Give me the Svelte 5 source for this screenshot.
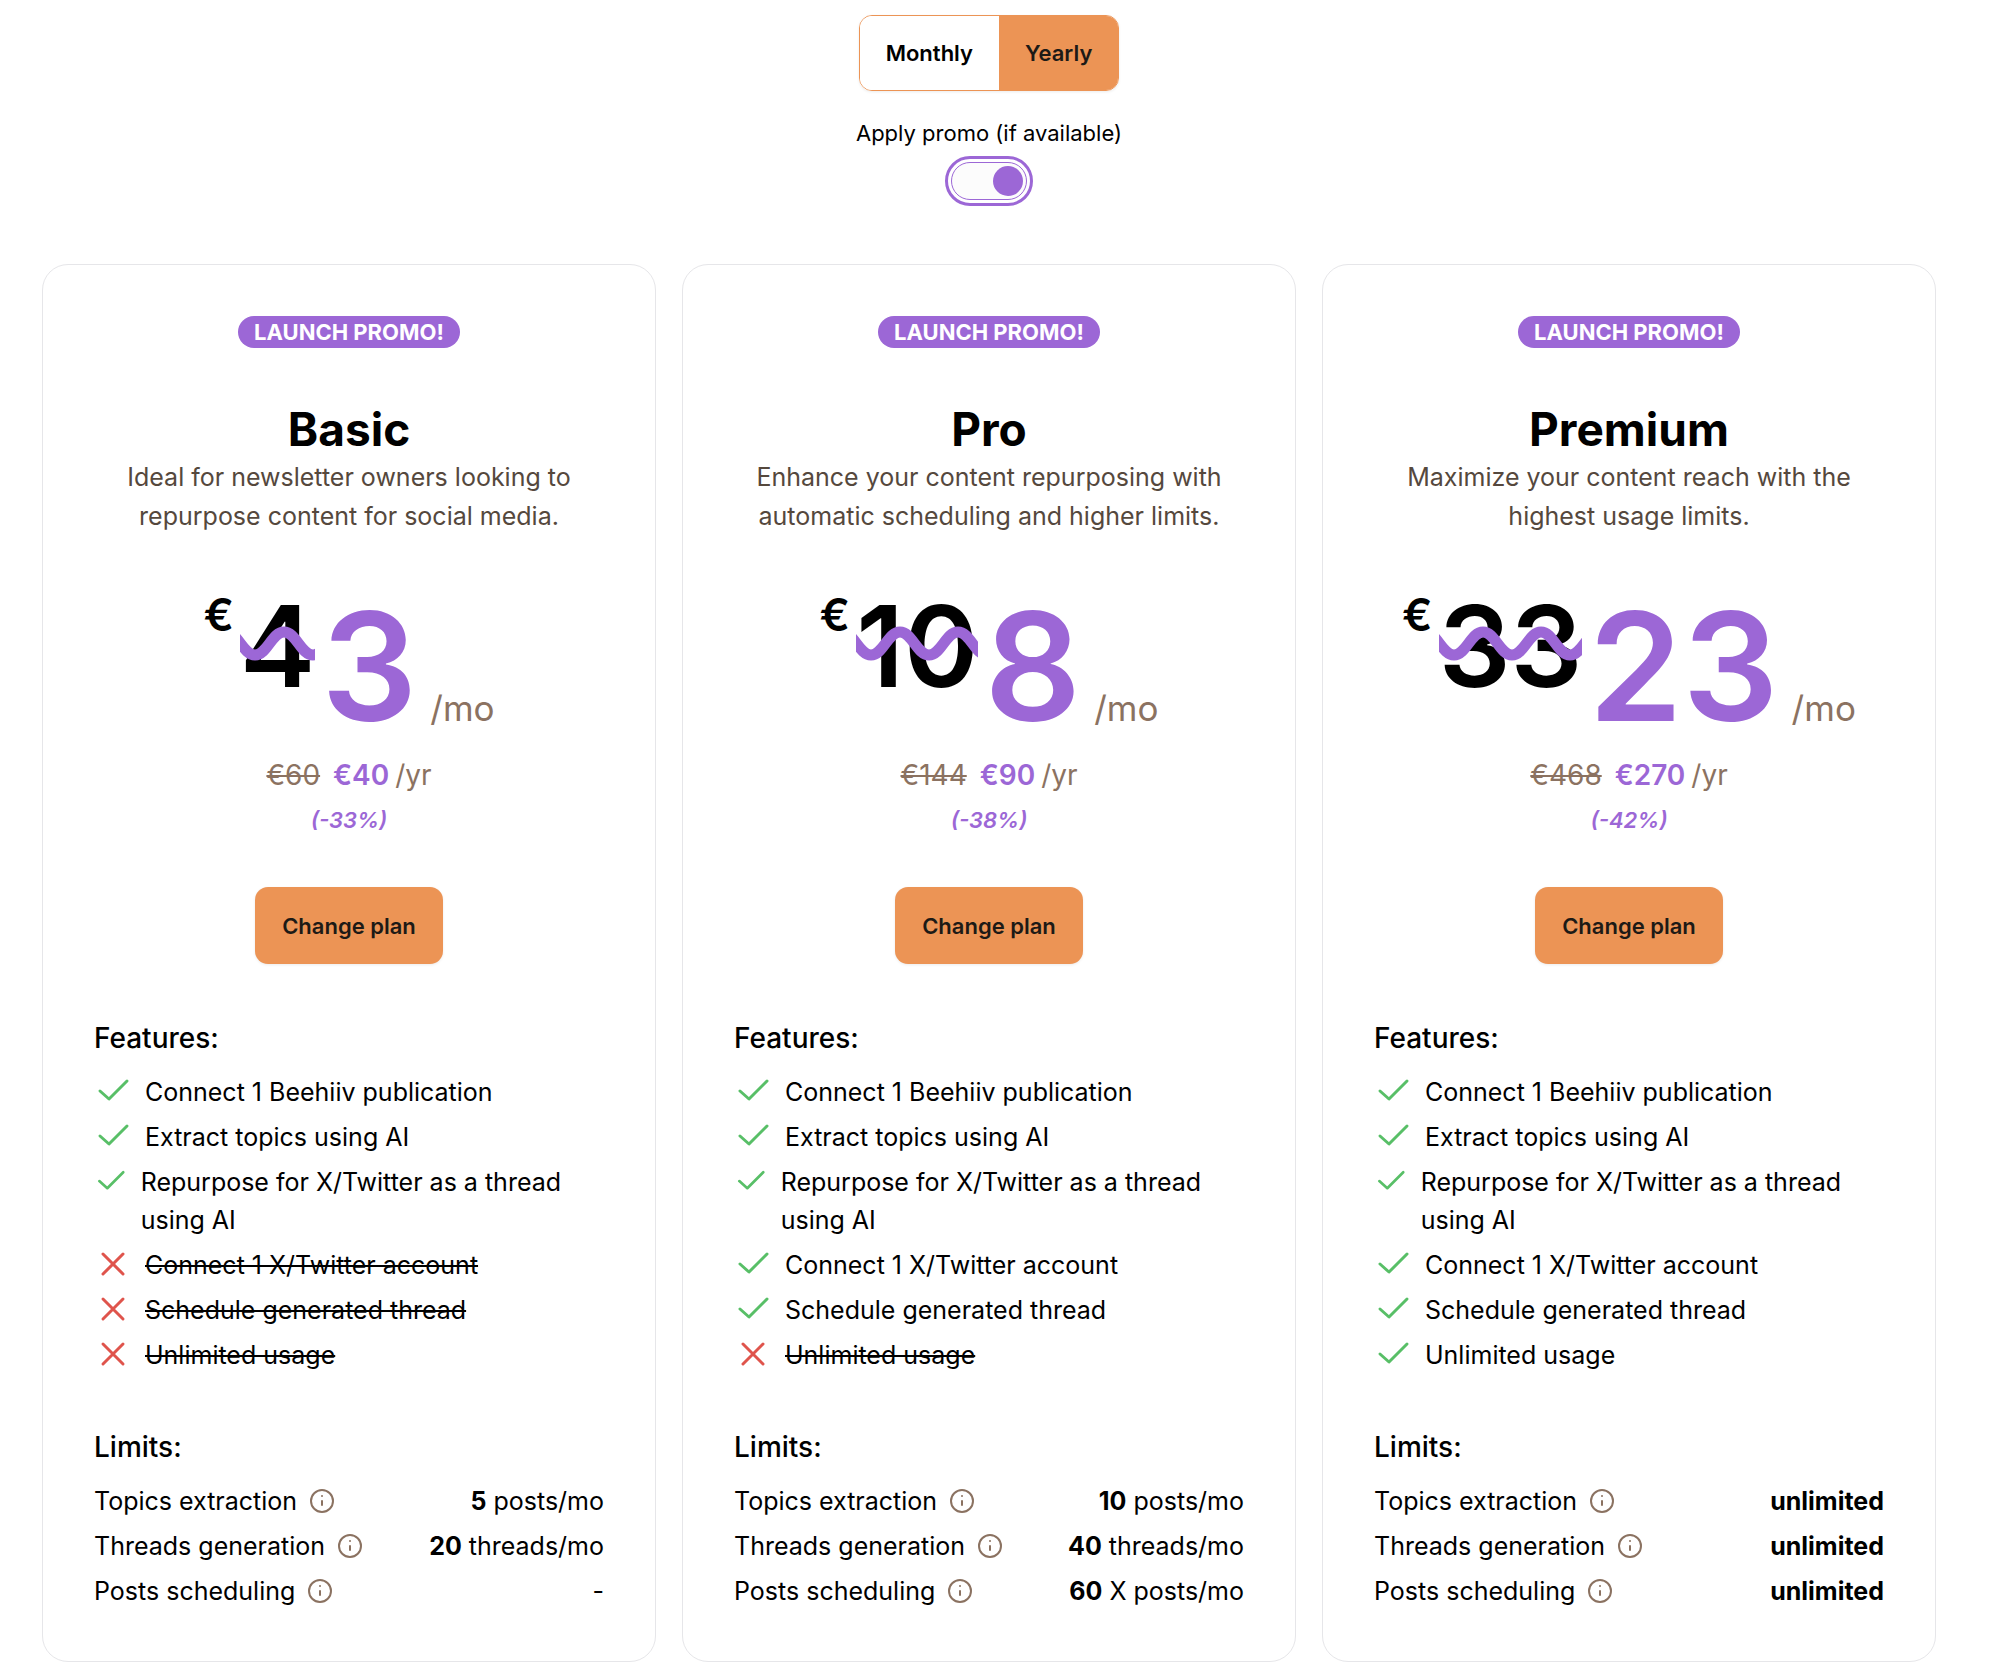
<script>
  let billing = $state('yearly');
  let promo = $state(true);

  const names = [
    'Connect 1 Beehiiv publication',
    'Extract topics using AI',
    'Repurpose for X/Twitter as a thread using AI',
    'Connect 1 X/Twitter account',
    'Schedule generated thread',
    'Unlimited usage'
  ];

  const plans = [
    {
      name: 'Basic',
      about: 'Ideal for newsletter owners looking to repurpose content for social media.',
      oldMonth: '4', month: '3', oldYear: '€60', year: '€40', off: '(-33%)',
      included: 3,
      limits: [['5', ' posts/mo'], ['20', ' threads/mo'], ['', '-']]
    },
    {
      name: 'Pro',
      about: 'Enhance your content repurposing with automatic scheduling and higher limits.',
      oldMonth: '10', month: '8', oldYear: '€144', year: '€90', off: '(-38%)',
      included: 5,
      limits: [['10', ' posts/mo'], ['40', ' threads/mo'], ['60', ' X posts/mo']]
    },
    {
      name: 'Premium',
      about: 'Maximize your content reach with the highest usage limits.',
      oldMonth: '33', month: '23', oldYear: '€468', year: '€270', off: '(-42%)',
      included: 6,
      limits: [['unlimited', ''], ['unlimited', ''], ['unlimited', '']]
    }
  ];

  const limitNames = ['Topics extraction', 'Threads generation', 'Posts scheduling'];
</script>

<main>
  <header>
    <div class="billing" role="group" aria-label="Billing period">
      <button class:active={billing === 'monthly'} onclick={() => (billing = 'monthly')}>Monthly</button>
      <button class:active={billing === 'yearly'} onclick={() => (billing = 'yearly')}>Yearly</button>
    </div>
    <label class="promo">
      <span>Apply promo (if available)</span>
      <input type="checkbox" role="switch" bind:checked={promo} />
    </label>
  </header>

  <div class="plans">
    {#each plans as plan}
      <article>
        <span class="badge">LAUNCH PROMO!</span>
        <h2>{plan.name}</h2>
        <p class="about">{plan.about}</p>
        <div class="price">
          <span class="euro">€</span>
          <s class="was">
            {plan.oldMonth}
            <svg class="wave" aria-hidden="true">
              <path d="M-14 9C-2 9 3 32 15 32S32 9 44 9S61 32 73 32S90 9 102 9S119 32 131 32S148 9 160 9S177 32 189 32" />
            </svg>
          </s>
          <strong class="now">{plan.month}</strong>
          <span class="per">/mo</span>
        </div>
        <p class="yearly"><s>{plan.oldYear}</s><strong>{plan.year}</strong><span>/yr</span></p>
        <em class="off">{plan.off}</em>
        <button class="change">Change plan</button>

        <h3>Features:</h3>
        <ul>
          {#each names as name, i}
            <li>
              {#if i < plan.included}
                <svg class="mark yes" viewBox="0 0 38 38" aria-hidden="true"><path d="M6 18l9 8L33 8" /></svg>
                <span>{name}</span>
              {:else}
                <svg class="mark no" viewBox="0 0 38 38" aria-hidden="true"><path d="M9 8l20 20M29 8L9 28" /></svg>
                <s>{name}</s>
              {/if}
            </li>
          {/each}
        </ul>

        <h3>Limits:</h3>
        <dl>
          {#each plan.limits as [amount, unit], i}
            <div>
              <dt>
                {limitNames[i]}
                <svg class="info" viewBox="0 0 24 24" aria-hidden="true">
                  <circle cx="12" cy="12" r="11" />
                  <path d="M12 12v4M12 7h.01" />
                </svg>
              </dt>
              <dd><strong>{amount}</strong>{unit}</dd>
            </div>
          {/each}
        </dl>
      </article>
    {/each}
  </div>
</main>

<style>
  :global(body) {
    margin: 0;
    background: #fff;
  }
  main {
    box-sizing: border-box;
    padding: 15px 58px 16px 42px;
    font: 400 25px/38px Inter, "Liberation Sans", sans-serif;
    color: #000;
  }
  h2, h3, p, ul, dl, dd { margin: 0; padding: 0; }
  button { font: inherit; cursor: pointer; }
  header {
    display: flex;
    flex-direction: column;
    align-items: center;
  }
  .billing {
    display: flex;
    box-sizing: border-box;
    height: 76px;
    border: 1px solid #ec9455;
    border-radius: 13px;
    overflow: hidden;
    box-shadow: 0 1px 3px rgb(0 0 0 / 8%);
  }
  .billing button {
    padding: 0 26px;
    border: 0;
    background: #fff;
    color: #000;
    font-size: 22px;
    font-weight: 600;
  }
  .billing .active {
    background: #ec9455;
    color: #1d1a16;
  }
  .promo {
    display: flex;
    flex-direction: column;
    align-items: center;
    margin-top: 26px;
    font-size: 22px;
    line-height: 32px;
  }
  .promo input {
    appearance: none;
    box-sizing: border-box;
    width: 76px;
    height: 38px;
    margin: 13px 0 0;
    padding: 3px;
    border: 1px solid #9c67d6;
    border-radius: 19px;
    outline: 3px solid #9c67d6;
    outline-offset: 3px;
    background: #fcfcfc;
    display: flex;
  }
  .promo input::before {
    content: "";
    width: 30px;
    height: 30px;
    border-radius: 50%;
    background: #9c67d6;
  }
  .promo input:checked { justify-content: flex-end; }
  .plans {
    display: grid;
    grid-template-columns: repeat(3, 1fr);
    gap: 26px;
    margin-top: 64px;
  }
  article {
    display: flex;
    flex-direction: column;
    align-items: center;
    padding: 51px;
    border: 1px solid #e6e6e9;
    border-radius: 26px;
  }
  .badge {
    padding: 0 16px;
    border-radius: 16px;
    background: #9c67d6;
    color: #fff;
    font-size: 22px;
    line-height: 32px;
    font-weight: 700;
  }
  h2 {
    margin-top: 53px;
    font-size: 46px;
    line-height: 57px;
    font-weight: 700;
  }
  .about {
    color: #55483d;
    line-height: 39px;
    text-align: center;
    padding: 0 13px;
  }
  .price {
    display: flex;
    align-items: flex-start;
    margin-top: 53px;
    height: 148px;
  }
  .euro {
    font-size: 45px;
    line-height: 51px;
    font-weight: 600;
    margin-right: 6px;
  }
  .was {
    position: relative;
    font-size: 113px;
    line-height: 115px;
    font-weight: 600;
    text-decoration: none;
  }
  .wave {
    position: absolute;
    left: 0;
    top: 34px;
    width: 100%;
    height: 41px;
    overflow: hidden;
    stroke: #9c67d6;
    stroke-width: 11;
  }
  .now {
    margin-left: 6px;
    color: #9c67d6;
    font-size: 151px;
    line-height: 154px;
    font-weight: 600;
  }
  .per {
    align-self: flex-end;
    margin-left: 13px;
    color: #8b7261;
    font-size: 35px;
    line-height: 58px;
  }
  .yearly {
    display: flex;
    margin-top: 16px;
    color: #8b7261;
    font-size: 28px;
    line-height: 44px;
  }
  .yearly strong {
    margin: 0 6px 0 13px;
    color: #9c67d6;
    font-weight: 600;
  }
  .off {
    margin-top: 4px;
    color: #9c67d6;
    font-size: 22px;
    line-height: 38px;
    font-weight: 600;
  }
  .change {
    margin: 48px 0 1px;
    height: 77px;
    padding: 0 27px;
    border: 0;
    border-radius: 13px;
    background: #ec9455;
    color: #1d1a16;
    font-size: 22px;
    font-weight: 600;
    box-shadow: 0 1px 3px rgb(0 0 0 / 8%);
  }
  h3 {
    align-self: stretch;
    margin-top: 51px;
    font-size: 28px;
    line-height: 45px;
    font-weight: 500;
  }
  ul, dl {
    align-self: stretch;
    display: flex;
    flex-direction: column;
    gap: 7px;
    margin-top: 12px;
    list-style: none;
  }
  li {
    display: flex;
    align-items: flex-start;
    gap: 13px;
  }
  svg {
    fill: none;
    stroke-linecap: round;
    stroke-linejoin: round;
  }
  .mark {
    width: 38px;
    min-width: 0;
    height: 38px;
    stroke-width: 3;
  }
  .yes { stroke: #58bf67; }
  .no { stroke: #df544c; }
  dl div, dt {
    display: flex;
    align-items: center;
  }
  dl div { justify-content: space-between; }
  dt { gap: 13px; }
  dd strong { font-weight: 700; }
  .info {
    width: 24px;
    height: 24px;
    stroke: #8b7261;
    stroke-width: 2;
  }
</style>
